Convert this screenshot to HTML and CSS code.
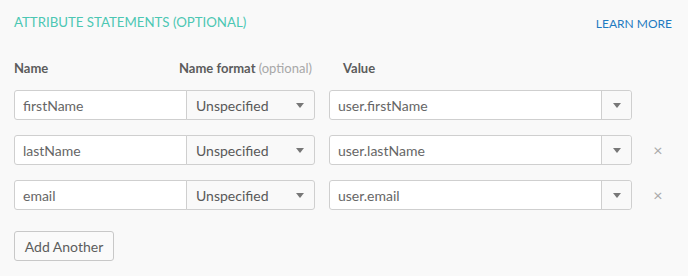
FILE: index.html
```html
<!DOCTYPE html>
<html lang="en">
<head>
    <meta charset="UTF-8">
    <meta name="viewport" content="width=device-width, initial-scale=1.0">
    <title>Attribute Statements</title>
    <link rel="stylesheet" href="styles.css">
</head>
<body>
    <div class="section">
        <div class="section-head">
            <h2>Attribute Statements (optional)</h2>
            <a href="#" class="learn-more">Learn more</a>
        </div>

        <div class="col-heads">
            <div class="col-name">Name</div>
            <div class="col-format">Name format <span class="muted">(optional)</span></div>
            <div class="col-value">Value</div>
        </div>

        <div class="attr-row">
            <input class="name-input" type="text" value="firstName">
            <div class="format-select"><span class="format-label">Unspecified</span><span class="caret"></span></div>
            <div class="value-box">
                <input type="text" value="user.firstName">
                <div class="value-btn"><span class="caret"></span></div>
            </div>
            <div class="remove"></div>
        </div>

        <div class="attr-row">
            <input class="name-input" type="text" value="lastName">
            <div class="format-select"><span class="format-label">Unspecified</span><span class="caret"></span></div>
            <div class="value-box">
                <input type="text" value="user.lastName">
                <div class="value-btn"><span class="caret"></span></div>
            </div>
            <div class="remove">&times;</div>
        </div>

        <div class="attr-row">
            <input class="name-input" type="text" value="email">
            <div class="format-select"><span class="format-label">Unspecified</span><span class="caret"></span></div>
            <div class="value-box">
                <input type="text" value="user.email">
                <div class="value-btn"><span class="caret"></span></div>
            </div>
            <div class="remove">&times;</div>
        </div>

        <button class="add-btn">Add Another</button>
    </div>
</body>
</html>
```

FILE: styles.css
```css
body {
    margin: 0;
    background-color: #f9f9f9;
    font-family: Lato, "Open Sans", Arial, sans-serif;
    color: #5d5d5d;
}
.section {
    padding: 12px 16px 0 14px;
}
.section-head {
    display: flex;
    justify-content: space-between;
    align-items: center;
    height: 20px;
}
h2 {
    margin: 0;
    font-size: 13.25px;
    font-weight: normal;
    text-transform: uppercase;
    color: #4cc7b3;
}
.learn-more {
    font-size: 12px;
    font-weight: normal;
    text-transform: uppercase;
    color: #1f7bc1;
    text-decoration: none;
    margin-top: 2px;
}
.col-heads {
    display: flex;
    margin-top: 26px;
    line-height: 20px;
    font-size: 13px;
    font-weight: bold;
    color: #5c5c5c;
}
.col-name {
    width: 165px;
}
.col-format {
    width: 164px;
}
.muted {
    font-weight: normal;
    color: #a8a8a8;
}
.attr-row {
    display: flex;
    align-items: center;
    margin-top: 12px;
    margin-bottom: 15px;
}
.attr-row + .attr-row {
    margin-top: 0;
}
.name-input {
    box-sizing: border-box;
    width: 173px;
    height: 30px;
    padding: 0 8px;
    border: 1px solid #cfcfcf;
    border-radius: 3px 0 0 3px;
    background: #fff;
    font-family: inherit;
    font-size: 14px;
    color: #666;
    outline: none;
}
.format-select {
    box-sizing: border-box;
    display: flex;
    align-items: center;
    justify-content: space-between;
    width: 129px;
    height: 30px;
    margin-left: -1px;
    padding: 0 10px 0 9px;
    border: 1px solid #cfcfcf;
    border-radius: 0 3px 3px 0;
    background: #f9f9f9;
}
.format-label {
    font-size: 14px;
    font-weight: 400;
    color: #585858;
}
.caret {
    width: 0;
    height: 0;
    border-left: 4px solid transparent;
    border-right: 4px solid transparent;
    border-top: 5px solid #777;
}
.value-box {
    box-sizing: border-box;
    display: flex;
    width: 303px;
    height: 30px;
    margin-left: 14px;
    border: 1px solid #cfcfcf;
    border-radius: 3px;
    background: #fff;
}
.value-box input {
    flex: 1;
    min-width: 0;
    border: 0;
    padding: 0 8px;
    background: transparent;
    font-family: inherit;
    font-size: 14px;
    color: #666;
    outline: none;
}
.value-btn {
    display: flex;
    align-items: center;
    justify-content: center;
    width: 29px;
    border-left: 1px solid #cfcfcf;
    border-radius: 0 3px 3px 0;
    background: #f9f9f9;
}
.remove {
    width: 16px;
    margin-left: 18px;
    font-size: 16px;
    line-height: 16px;
    text-align: center;
    color: #aaa;
    cursor: pointer;
}
.add-btn {
    box-sizing: border-box;
    width: 100px;
    height: 30px;
    margin-top: 6px;
    border: 1px solid #c8c8c8;
    border-radius: 3px;
    background: #fafafa;
    font-family: inherit;
    font-size: 14px;
    color: #5d5d5d;
}
```
